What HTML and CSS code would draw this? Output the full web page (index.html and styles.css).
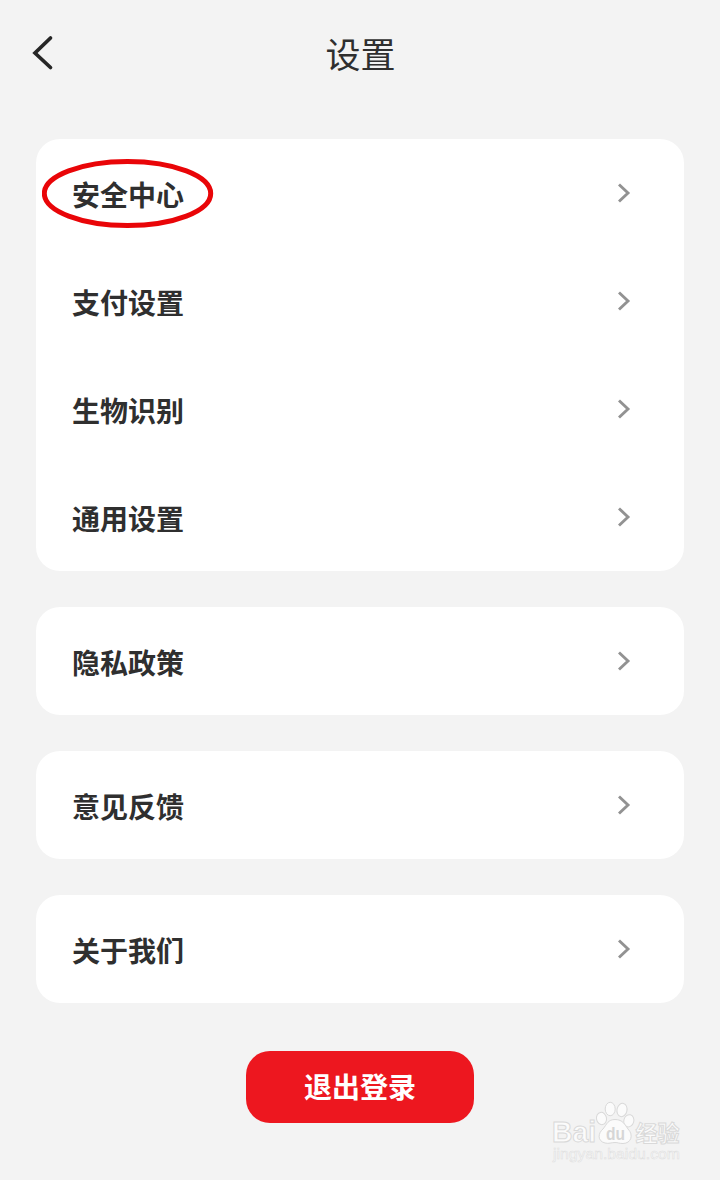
FILE: index.html
```html
<!DOCTYPE html>
<html lang="zh-CN">
<head>
<meta charset="utf-8">
<title>设置</title>
<link rel="stylesheet" href="styles.css">
</head>
<body>
<svg class="defs" width="0" height="0" aria-hidden="true">
  <symbol id="chevron" viewBox="0 0 14 22"><path d="M2 2.5 L11 11 L2 19.5" fill="none" stroke="#929292" stroke-width="2.9"/></symbol>
</svg>
<div class="screen">
  <header class="header">
    <svg class="back" viewBox="0 0 24 38"><path d="M19.5 4 L4 19 L19.5 33.5" fill="none" stroke="#262626" stroke-width="3.7" stroke-linecap="round" stroke-linejoin="miter"/></svg>
    <h1 class="title">设置</h1>
  </header>
  <main class="content">
    <section class="card">
      <div class="row">
        <span class="label">安全中心</span><svg class="chevron"><use href="#chevron"/></svg>
        <svg class="highlight" viewBox="0 0 172 70"><ellipse cx="85.5" cy="34.5" rx="83.2" ry="32" fill="none" stroke="#e90508" stroke-width="5"/></svg>
      </div>
      <div class="row"><span class="label">支付设置</span><svg class="chevron"><use href="#chevron"/></svg></div>
      <div class="row"><span class="label">生物识别</span><svg class="chevron"><use href="#chevron"/></svg></div>
      <div class="row"><span class="label">通用设置</span><svg class="chevron"><use href="#chevron"/></svg></div>
    </section>
    <section class="card">
      <div class="row"><span class="label">隐私政策</span><svg class="chevron"><use href="#chevron"/></svg></div>
    </section>
    <section class="card">
      <div class="row"><span class="label">意见反馈</span><svg class="chevron"><use href="#chevron"/></svg></div>
    </section>
    <section class="card">
      <div class="row"><span class="label">关于我们</span><svg class="chevron"><use href="#chevron"/></svg></div>
    </section>
  </main>
  <button class="logout">退出登录</button>
  <svg class="watermark" viewBox="0 0 140 70">
    <g class="mark">
      <text x="1" y="42" font-size="29" textLength="44" lengthAdjust="spacingAndGlyphs">Bai</text>
      <ellipse cx="50.5" cy="18.5" rx="5" ry="6.2" transform="rotate(-10 50.5 18.5)"/>
      <ellipse cx="59.2" cy="9" rx="5" ry="6.7"/>
      <ellipse cx="71" cy="10" rx="5" ry="6.7" transform="rotate(12 71 10)"/>
      <ellipse cx="77.8" cy="20.8" rx="5" ry="6.2" transform="rotate(15 77.8 20.8)"/>
      <path d="M64 19.5 C72 19.5 74 25 77 29 C83 35 80 43.500 72 43.500 C68 43.500 67 42.500 64 42.500 C60 42.500 58 44 54 43 C46 41 47 33 52 29 C56 24 57 19.500 64 19.500 Z"/>
      <text class="cjk" x="84.500" y="40.500" font-size="22" textLength="44">经验</text>
    </g>
    <text class="du" x="55" y="40" font-size="19" textLength="19" lengthAdjust="spacingAndGlyphs">du</text>
    <text class="site" x="2" y="59" font-size="14" textLength="127" lengthAdjust="spacingAndGlyphs">jingyan.baidu.com</text>
  </svg>
</div>
</body>
</html>
```
FILE: styles.css
```css
* {
  box-sizing: border-box;
}

body {
  margin: 0;
  background: #f3f3f3;
  color: #2f2f2f;
  font-family: "Noto Sans CJK SC", sans-serif;
}

.defs {
  display: block;
}

.screen {
  position: relative;
  width: 720px;
  height: 1180px;
  overflow: hidden;
}

.header {
  display: grid;
  grid-template-columns: 72px 1fr 72px;
  align-items: center;
  height: 107px;
}

.back {
  width: 24px;
  height: 38px;
  margin: -1px 0 0 31px;
}

.title {
  margin: 0 0 2px;
  padding-left: 1px;
  font-size: 35px;
  font-weight: 400;
  line-height: 52px;
  text-align: center;
}

.content {
  display: flex;
  flex-direction: column;
  gap: 36px;
  padding: 32px 36px 0;
}

.card {
  border-radius: 24px;
  background: #fff;
}

.row {
  position: relative;
  display: flex;
  align-items: center;
  justify-content: space-between;
  height: 108px;
  padding: 0 53px 0 36px;
}

.label {
  margin-top: 1px;
  font-size: 28px;
  font-weight: 700;
  line-height: 40px;
}

.chevron {
  width: 14px;
  height: 22px;
}

.highlight {
  position: absolute;
  top: 20px;
  left: 6px;
  width: 172px;
  height: 70px;
}

.logout {
  display: block;
  width: 228px;
  height: 72px;
  margin: 48px auto 0;
  padding: 0 0 2px;
  border: 0;
  border-radius: 24px;
  background: #ed171f;
  color: #fff;
  font: 700 28px/70px "Noto Sans CJK SC", sans-serif;
}

.watermark {
  position: absolute;
  top: 1100px;
  left: 551px;
  width: 140px;
  height: 70px;
  font-family: "Liberation Sans", sans-serif;
}

.mark {
  fill: #fbfbfb;
  stroke: #d9d9d9;
  stroke-width: 1;
  font-weight: 700;
}

.cjk {
  font-family: "Noto Sans CJK SC", sans-serif;
}

.du {
  fill: #d6d6d6;
  font-weight: 700;
}

.site {
  fill: #f9f9f9;
  stroke: #dedede;
  stroke-width: 0.5;
}
```
